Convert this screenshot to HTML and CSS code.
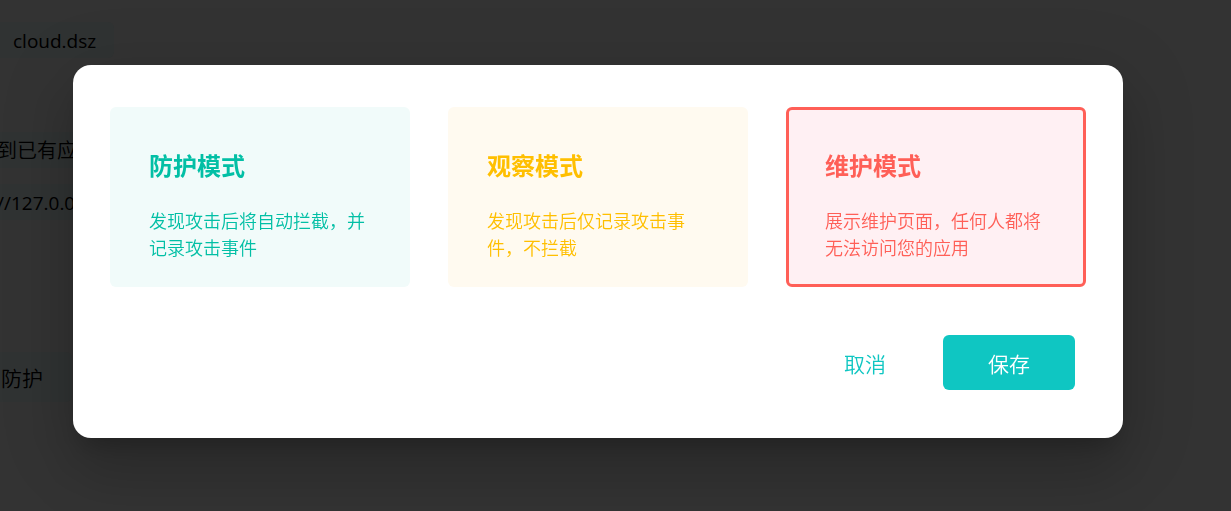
FILE: index.html
```html
<!DOCTYPE html>
<html lang="zh-CN">
<head>
<meta charset="utf-8">
<title>防护模式</title>
<link rel="stylesheet" href="styles.css">
</head>
<body>
<main class="page">
  <p class="field field-domain">cloud.dsz</p>
  <p class="field field-existing">到已有应</p>
  <p class="field field-upstream">//127.0.0</p>
  <p class="field field-mode">防护</p>
</main>
<div class="overlay">
  <section class="dialog" role="dialog" aria-modal="true" aria-label="选择模式">
    <div class="modes">
      <button type="button" class="mode mode-protect" aria-pressed="false">
        <span class="mode-title">防护模式</span>
        <span class="mode-text">发现攻击后将自动拦截，并记录攻击事件</span>
      </button>
      <button type="button" class="mode mode-observe" aria-pressed="false">
        <span class="mode-title">观察模式</span>
        <span class="mode-text">发现攻击后仅记录攻击事件，不拦截</span>
      </button>
      <button type="button" class="mode mode-maintain" aria-pressed="true">
        <span class="mode-title">维护模式</span>
        <span class="mode-text">展示维护页面，任何人都将无法访问您的应用</span>
      </button>
    </div>
    <div class="actions">
      <button type="button" class="btn btn-cancel">取消</button>
      <button type="button" class="btn btn-save">保存</button>
    </div>
  </section>
</div>
</body>
</html>
```

FILE: styles.css
```css
* {
  box-sizing: border-box;
}

body {
  margin: 0;
  min-height: 100vh;
  overflow: hidden;
  background: #333333;
  color: #000000;
  font-family: "Open Sans", "Noto Sans CJK SC", sans-serif;
  font-weight: 350;
}

.page {
  display: flex;
  flex-direction: column;
  align-items: flex-start;
  margin-left: -24px;
  padding-top: 22px;
}

.field {
  margin: 0;
  padding: 2px 18px 0 21px;
  border-radius: 6px;
  background: #303333;
  font-size: 19px;
  line-height: 34px;
  white-space: nowrap;
}

.field-domain {
  padding-left: 37px;
  margin-bottom: 74px;
  font-weight: 400;
}

.field-existing {
  margin-bottom: 16px;
  font-size: 20px;
}

.field-upstream {
  margin-bottom: 132px;
  font-weight: 400;
}

.field-mode {
  padding: 2px 29px 0 25px;
  font-size: 21px;
  line-height: 48px;
}

.overlay {
  position: fixed;
  inset: 0;
  display: flex;
  align-items: flex-start;
  padding: 65px 108px 73px 73px;
}

.dialog {
  flex: 1;
  padding: 42px 37px 48px;
  border-radius: 18px;
  background: #ffffff;
  box-shadow:
    0 16px 22px -10px rgba(0, 0, 0, 0.2),
    0 36px 57px 4px rgba(0, 0, 0, 0.12),
    0 14px 69px 12px rgba(0, 0, 0, 0.1);
}

.modes {
  display: grid;
  grid-template-columns: repeat(3, 1fr);
  gap: 38px;
}

.mode {
  display: flex;
  flex-direction: column;
  gap: 24px;
  padding: 38px 36px 22px;
  border: 3px solid transparent;
  border-radius: 6px;
  font-family: inherit;
  font-weight: inherit;
  text-align: left;
  cursor: pointer;
}

.mode-title {
  font-size: 24px;
  font-weight: 700;
  line-height: 36px;
}

.mode-text {
  font-size: 18px;
  line-height: 27px;
}

.mode-protect {
  background: #f1fbfa;
  color: #02bfa5;
}

.mode-observe {
  background: #fffaf0;
  color: #ffbf00;
}

.mode-maintain {
  background: #fff0f3;
  color: #ff5f57;
}

.mode[aria-pressed="true"] {
  border-color: currentColor;
}

.actions {
  display: flex;
  justify-content: flex-end;
  gap: 12px;
  margin-top: 48px;
  padding-right: 11px;
}

.btn {
  min-width: 132px;
  padding: 11px 24px 7px;
  border: 0;
  border-radius: 6px;
  font-family: inherit;
  font-size: 21px;
  font-weight: inherit;
  line-height: 37px;
  cursor: pointer;
}

.btn-cancel {
  background: transparent;
  color: #0fc6c2;
}

.btn-save {
  background: #0fc6c2;
  color: #ffffff;
}
```
